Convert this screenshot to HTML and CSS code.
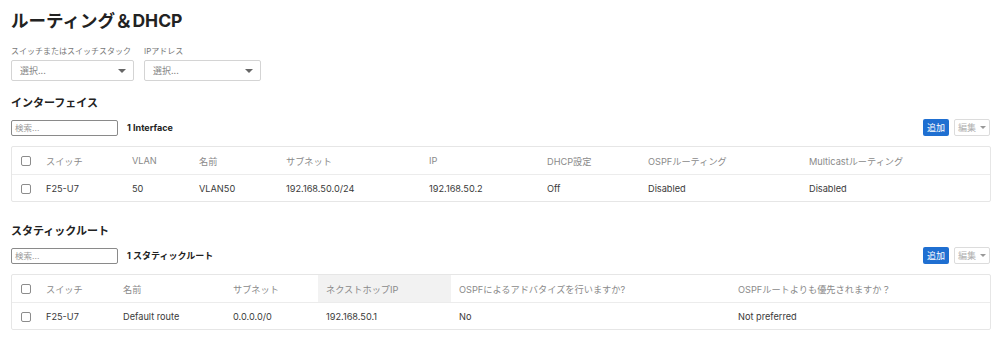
FILE: index.html
```html
<!DOCTYPE html>
<html lang="ja">
<head>
  <meta charset="UTF-8">
  <title>ルーティング＆DHCP</title>
  <link rel="stylesheet" href="styles.css">
</head>
<body>
  <div class="page">
    <h1 class="title">ルーティング＆DHCP</h1>

    <div class="filters">
      <div class="filter">
        <div class="filter-label">スイッチまたはスイッチスタック</div>
        <div class="select select-wide">選択...<span class="caret"></span></div>
      </div>
      <div class="filter">
        <div class="filter-label">IPアドレス</div>
        <div class="select">選択...<span class="caret"></span></div>
      </div>
    </div>

    <!-- インターフェイス -->
    <h2 class="section-title">インターフェイス</h2>
    <div class="toolbar">
      <div class="search">検索...</div>
      <div class="count">1 Interface</div>
      <div class="actions">
        <div class="btn-add">追加</div>
        <div class="btn-edit">編集<span class="caret-sm"></span></div>
      </div>
    </div>
    <div class="table-box">
      <table class="grid">
        <colgroup>
          <col style="width:26px"><col style="width:86px"><col style="width:67px"><col style="width:87px">
          <col style="width:143px"><col style="width:118px"><col style="width:101px"><col style="width:161px"><col>
        </colgroup>
        <thead>
          <tr>
            <th class="chk"><span class="box"></span></th>
            <th>スイッチ</th><th>VLAN</th><th>名前</th><th>サブネット</th><th>IP</th>
            <th>DHCP設定</th><th>OSPFルーティング</th><th>Multicastルーティング</th>
          </tr>
        </thead>
        <tbody>
          <tr>
            <td class="chk"><span class="box"></span></td>
            <td>F25-U7</td><td>50</td><td>VLAN50</td><td>192.168.50.0/24</td><td>192.168.50.2</td>
            <td>Off</td><td>Disabled</td><td>Disabled</td>
          </tr>
        </tbody>
      </table>
    </div>

    <!-- スタティックルート -->
    <h2 class="section-title second">スタティックルート</h2>
    <div class="toolbar">
      <div class="search">検索...</div>
      <div class="count">1 スタティックルート</div>
      <div class="actions">
        <div class="btn-add">追加</div>
        <div class="btn-edit">編集<span class="caret-sm"></span></div>
      </div>
    </div>
    <div class="table-box">
      <table class="grid">
        <colgroup>
          <col style="width:26px"><col style="width:77px"><col style="width:110px"><col style="width:93px">
          <col style="width:133px"><col style="width:279px"><col>
        </colgroup>
        <thead>
          <tr>
            <th class="chk"><span class="box"></span></th>
            <th>スイッチ</th><th>名前</th><th>サブネット</th><th class="sorted">ネクストホップIP</th>
            <th>OSPFによるアドバタイズを行いますか?</th><th>OSPFルートよりも優先されますか？</th>
          </tr>
        </thead>
        <tbody>
          <tr>
            <td class="chk"><span class="box"></span></td>
            <td>F25-U7</td><td>Default route</td><td>0.0.0.0/0</td><td>192.168.50.1</td>
            <td>No</td><td>Not preferred</td>
          </tr>
        </tbody>
      </table>
    </div>
  </div>
</body>
</html>
```

FILE: styles.css
```css
html, body {
  margin: 0;
  padding: 0;
  background: #fff;
  font-family: Inter, "Noto Sans CJK JP", sans-serif;
  color: #333;
}
.page {
  padding: 10px 8px 0 11px;
}
.title {
  margin: 0;
  font-size: 17.5px;
  line-height: 22px;
  font-weight: bold;
  color: #222;
}

/* フィルター */
.filters {
  display: flex;
  gap: 10px;
  margin-top: 13px;
}
.filter-label {
  font-size: 8px;
  line-height: 12px;
  color: #777;
  margin-bottom: 3px;
}
.select {
  position: relative;
  width: 117px;
  height: 21px;
  box-sizing: border-box;
  border: 1px solid #d4d4d4;
  border-radius: 2px;
  padding-left: 8px;
  font-size: 9px;
  line-height: 19px;
  color: #888;
}
.select-wide { width: 123px; }
.caret {
  position: absolute;
  right: 7px;
  top: 8px;
  width: 0; height: 0;
  border-left: 4px solid transparent;
  border-right: 4px solid transparent;
  border-top: 4px solid #666;
}

.section-title {
  margin: 14px 0 0;
  font-size: 11px;
  line-height: 16px;
  font-weight: bold;
  color: #222;
}
.section-title.second { margin-top: 21px; }

/* ツールバー */
.toolbar {
  display: flex;
  align-items: center;
  margin-top: 8px;
  height: 17px;
}
.search {
  width: 107px;
  height: 16px;
  box-sizing: border-box;
  border: 1px solid #8a8a8a;
  border-radius: 2px;
  padding-left: 3px;
  font-size: 8.5px;
  line-height: 14px;
  color: #999;
}
.count {
  margin-left: 9px;
  font-size: 9px;
  font-weight: bold;
  color: #222;
}
.actions {
  margin-left: auto;
  display: flex;
  gap: 5px;
  padding-right: 1px;
}
.btn-add {
  height: 17px;
  padding: 0 4px;
  background: #1f6fd1;
  border-radius: 2px;
  color: #fff;
  font-size: 9px;
  line-height: 17px;
}
.btn-edit {
  height: 17px;
  box-sizing: border-box;
  padding: 0 3px;
  border: 1px solid #dcdcdc;
  border-radius: 2px;
  color: #b0b0b0;
  font-size: 9px;
  line-height: 15px;
  display: flex;
  align-items: center;
  gap: 4px;
}
.caret-sm {
  width: 0; height: 0;
  border-left: 3px solid transparent;
  border-right: 3px solid transparent;
  border-top: 3px solid #999;
}

/* テーブル */
.table-box {
  margin-top: 10px;
  border: 1px solid #e6e6e6;
  border-radius: 2px;
}
.grid {
  width: 100%;
  border-collapse: collapse;
  table-layout: fixed;
  font-size: 9.2px;
}
.grid th, .grid td {
  padding: 0 8px;
  text-align: left;
  white-space: nowrap;
  overflow: hidden;
}
.grid th {
  height: 27px;
  font-weight: normal;
  color: #8a8a8a;
  border-bottom: 1px solid #ececec;
}
.grid td {
  height: 26px;
  color: #3a3a3a;
}
.grid th.sorted { background: #f2f2f2; }
.grid .chk { padding-left: 9px; padding-right: 0; }
.box {
  display: inline-block;
  width: 8px;
  height: 8px;
  border: 1px solid #8c8c8c;
  border-radius: 2px;
  vertical-align: middle;
}
```
